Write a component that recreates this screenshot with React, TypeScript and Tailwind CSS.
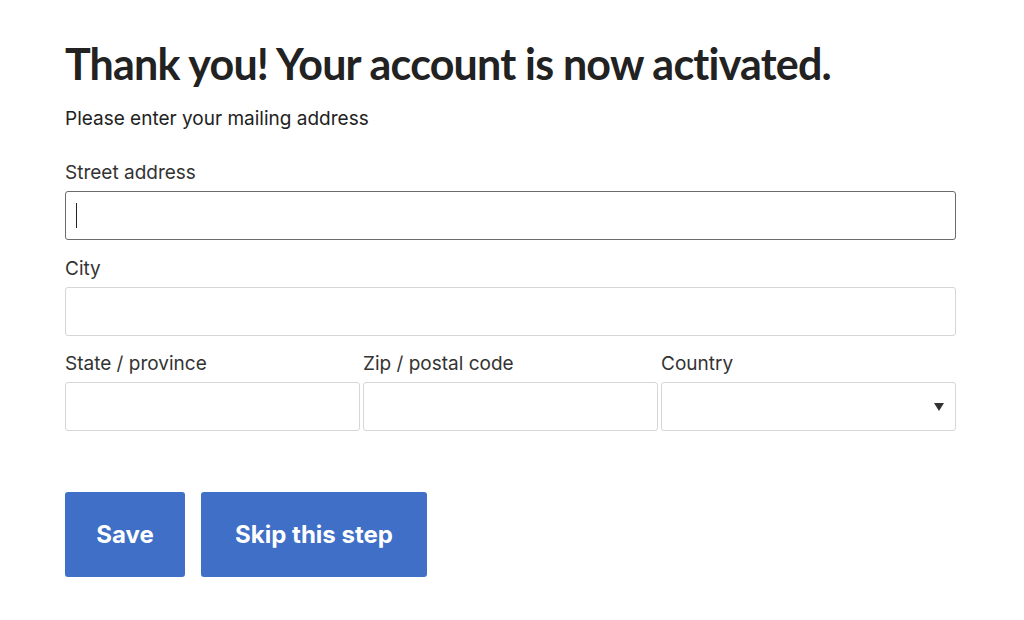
import { useState } from 'react';

const label = 'block text-[19px] leading-6 text-[#333]';
const field =
  'block w-full h-[49px] px-3 border rounded-[3px] bg-white text-[19px] text-[#222] focus:outline-none';
const input = `${field} border-[#d6d6d6]`;

export default function App() {
  const [street, setStreet] = useState('');
  const [city, setCity] = useState('');
  const [state, setState] = useState('');
  const [zip, setZip] = useState('');
  const [country, setCountry] = useState('');

  return (
    <div className="min-h-screen bg-white font-['Inter',sans-serif]">
      <div className="w-[891px] ml-[65px] pt-[36px]">
        <h1 className="font-['Lato',sans-serif] font-bold text-[43px] leading-[56px] tracking-[-0.8px] text-[#222]">
          Thank you! Your account is now activated.
        </h1>
        <p className="mt-[15px] text-[19px] leading-6 text-[#222]">Please enter your mailing address</p>

        <form onSubmit={(e) => e.preventDefault()}>
          <label className={`${label} mt-[30px]`}>
            Street address
            <div className="relative mt-[6px]">
              <input
                autoFocus
                value={street}
                onChange={(e) => setStreet(e.target.value)}
                className={`${field} border-[#6b6b6b] caret-[#222]`}
              />
              {street === '' && (
                <span className="absolute left-[11px] top-[12px] w-px h-[25px] bg-[#222] pointer-events-none" />
              )}
            </div>
          </label>

          <label className={`${label} mt-[17px]`}>
            City
            <input value={city} onChange={(e) => setCity(e.target.value)} className={`${input} mt-[6px]`} />
          </label>

          <div className="grid grid-cols-3 gap-[3px] mt-[16px]">
            <label className={label}>
              State / province
              <input value={state} onChange={(e) => setState(e.target.value)} className={`${input} mt-[6px]`} />
            </label>
            <label className={label}>
              Zip / postal code
              <input value={zip} onChange={(e) => setZip(e.target.value)} className={`${input} mt-[6px]`} />
            </label>
            <label className={label}>
              Country
              <div className="relative mt-[6px]">
                <select
                  value={country}
                  onChange={(e) => setCountry(e.target.value)}
                  className={`${input} appearance-none pr-8`}
                >
                  <option value=""></option>
                  <option value="US">United States</option>
                  <option value="CA">Canada</option>
                </select>
                <svg
                  className="absolute right-[12px] top-1/2 -translate-y-1/2 pointer-events-none"
                  width="10"
                  height="8"
                  viewBox="0 0 10 8"
                >
                  <path d="M0 0h10L5 8z" fill="#333" />
                </svg>
              </div>
            </label>
          </div>

          <div className="flex gap-4 mt-[61px]">
            <button
              type="submit"
              className="w-[120px] h-[85px] rounded-[3px] bg-[#3f6fc6] text-white text-[24px] font-bold"
            >
              Save
            </button>
            <button
              type="button"
              className="w-[226px] h-[85px] rounded-[3px] bg-[#3f6fc6] text-white text-[24px] font-bold"
            >
              Skip this step
            </button>
          </div>
        </form>
      </div>
    </div>
  );
}
